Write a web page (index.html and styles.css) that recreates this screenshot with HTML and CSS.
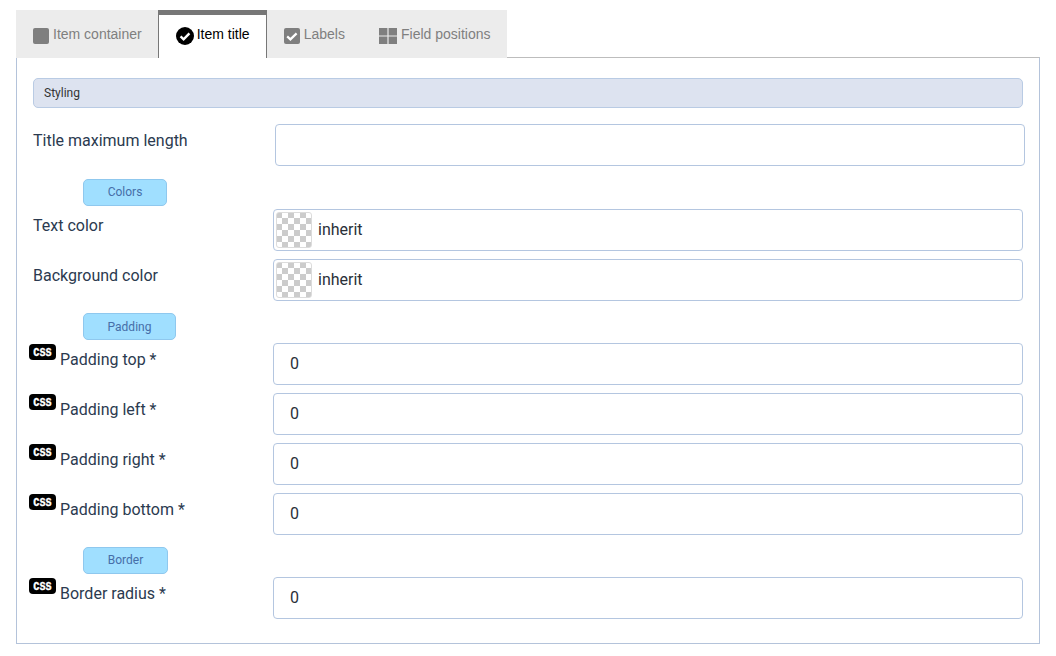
FILE: index.html
```html
<!DOCTYPE html>
<html lang="en">
<head>
<meta charset="utf-8">
<title>Item title</title>
<link rel="stylesheet" href="styles.css">
</head>
<body>
<div class="page">
  <div class="tabs">
    <div class="tab">
      <svg class="tab-icon" width="16" height="16" viewBox="0 0 16 16"><rect x="0" y="0" width="16" height="16" rx="2" fill="#7f7f7f"/></svg>
      <span>Item container</span>
    </div>
    <div class="tab active">
      <svg class="tab-icon" width="18" height="18" viewBox="0 0 18 18"><circle cx="9" cy="9" r="9" fill="#000"/><path d="M4.6 9.4l3 3 5.8-6" fill="none" stroke="#fff" stroke-width="2.4"/></svg>
      <span>Item title</span>
    </div>
    <div class="tab">
      <svg class="tab-icon" width="16" height="16" viewBox="0 0 16 16"><rect width="16" height="16" rx="2" fill="#7f7f7f"/><path d="M3.2 8.4l3.2 3 6.2-6" fill="none" stroke="#fff" stroke-width="2.2"/></svg>
      <span>Labels</span>
    </div>
    <div class="tab">
      <svg class="tab-icon" width="18" height="16" viewBox="0 0 18 16"><path d="M0 0h8.400v7.400H0zM9.600 0H18v7.400H9.600zM0 8.600h8.400V16H0zM9.600 8.600H18V16H9.600z" fill="#7f7f7f"/></svg>
      <span>Field positions</span>
    </div>
  </div>
  <div class="panel">
    <div class="section-title">Styling</div>

    <div class="row row-first">
      <label class="label">Title maximum length</label>
      <div class="field field-shifted"></div>
    </div>

    <div class="pill">Colors</div>
    <div class="row">
      <label class="label">Text color</label>
      <div class="field"><span class="swatch"></span><span>inherit</span></div>
    </div>
    <div class="row">
      <label class="label">Background color</label>
      <div class="field"><span class="swatch"></span><span>inherit</span></div>
    </div>

    <div class="pill pill-padding">Padding</div>
    <div class="row">
      <label class="label"><span class="css"><span class="css-text">css</span></span>Padding top *</label>
      <div class="field field-num">0</div>
    </div>
    <div class="row">
      <label class="label"><span class="css"><span class="css-text">css</span></span>Padding left *</label>
      <div class="field field-num">0</div>
    </div>
    <div class="row">
      <label class="label"><span class="css"><span class="css-text">css</span></span>Padding right *</label>
      <div class="field field-num">0</div>
    </div>
    <div class="row">
      <label class="label"><span class="css"><span class="css-text">css</span></span>Padding bottom *</label>
      <div class="field field-num">0</div>
    </div>

    <div class="pill pill-border">Border</div>
    <div class="row">
      <label class="label"><span class="css"><span class="css-text">css</span></span>Border radius *</label>
      <div class="field field-num">0</div>
    </div>
  </div>
</div>
</body>
</html>
```
FILE: styles.css
```css
* { box-sizing: border-box; }
html, body { margin: 0; background: #fff; }
body { font-family: Roboto, "Liberation Sans", sans-serif; color: #1f2d3d; }
.page { padding: 10px 16px 0; width: 1056px; }

.tabs { display: flex; width: 491px; height: 48px; background: #ececec; margin-bottom: -1px; position: relative; z-index: 1; font-family: "Liberation Sans", Arial, sans-serif; font-size: 14px; color: #7f7f7f; }
.tab { display: flex; align-items: center; gap: 4px; height: 47px; padding: 1px 16px 0 17px; white-space: nowrap; }
.tab:nth-child(3) { padding: 1px 17px 0 17px; }
.tab:nth-child(4) { padding: 1px 16px 0 17px; }
.tab.active { width: 109px; height: 48px; gap: 3px; padding: 0 16px 5px 17px; background: #fff; color: #000; border-top: 5px solid #777; border-left: 1px solid #777; border-right: 1px solid #777; }
.tab-icon { flex: none; margin-top: 4px; }

.panel { width: 1024px; height: 587px; border: 1px solid #b4c3da; border-top-color: #bdbdbd; padding: 20px 16px 0; }
.section-title { width: 990px; height: 30px; line-height: 28px; padding-left: 10px; border: 1px solid #b9cbe4; border-radius: 5px; background: #dde3f0; font-size: 12px; color: #333; }

.row { display: grid; grid-template-columns: 240px 750px; height: 42px; margin-bottom: 8px; font-size: 16px; }
.row-first { margin-top: 16px; margin-bottom: 13px; }
.label { display: block; padding-top: 7px; line-height: 20px; color: #2b3a4f; white-space: nowrap; }
.field { display: flex; align-items: center; height: 42px; padding-bottom: 2px; border: 1px solid #b4c6e0; border-radius: 4px; color: #2a3038; }
.field-shifted { width: 750px; margin-left: 2px; }
.field-num { padding-left: 16px; }

.swatch { flex: none; width: 36px; height: 36px; margin: 2px 6px 0 2px; border: 1px solid #dcdcdc; border-radius: 3px; background-color: #fff; background-image: conic-gradient(#fff 25%, #ccc 0 50%, #fff 0 75%, #ccc 0); background-size: 12px 12px; background-origin: border-box; }

.pill { width: 84px; height: 27px; margin: 0 0 3px 50px; line-height: 25px; text-align: center; font-size: 12px; color: #466ea8; background: #a0dfff; border: 1px solid #8fc8ee; border-radius: 5px; }
.pill-padding { width: 93px; margin-top: 12px; line-height: 26px; }
.pill-border { width: 85px; margin-top: 12px; }

.css { display: inline-block; position: relative; top: -9px; margin: 0 4px 0 -4px; width: 27px; height: 16px; line-height: 15px; text-align: center; border-radius: 4px; background: #000; color: #fff; font-family: "Liberation Sans", Arial, sans-serif; font-size: 11px; font-weight: 700; vertical-align: middle; }
.css-text { display: inline-block; transform: scaleY(1.3); -webkit-text-stroke: 0.3px #fff; }
```
